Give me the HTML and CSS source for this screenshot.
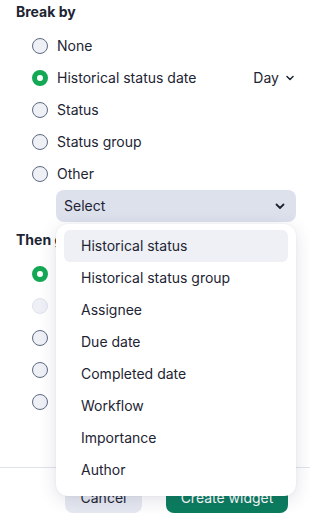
FILE: index.html
```html
<!DOCTYPE html>
<html lang="en">
	<head>
		<meta charset="UTF-8" />
		<meta name="viewport" content="width=device-width, initial-scale=1.0" />
		<title>Break by</title>
		<link rel="stylesheet" href="styles.css">
	</head>
	<body>
		<div class="panel">
			<div class="section">
				<h2 class="heading">Break by</h2>
				<div class="options">
					<label class="option"><span class="radio"></span><span class="label">None</span></label>
					<label class="option"><span class="radio checked"></span><span class="label">Historical status date</span>
						<span class="unit">Day
							<svg width="8" height="6" viewBox="0 0 8 6"><path d="M1 1.5l3 3 3-3" fill="none" stroke="#1d2433" stroke-width="1.5" stroke-linecap="round" stroke-linejoin="round"/></svg>
						</span>
					</label>
					<label class="option"><span class="radio"></span><span class="label">Status</span></label>
					<label class="option"><span class="radio"></span><span class="label">Status group</span></label>
					<label class="option"><span class="radio"></span><span class="label">Other</span></label>
					<div class="select-wrap">
						<div class="select">
							<span>Select</span>
							<svg width="10" height="7" viewBox="0 0 10 7"><path d="M1.5 1.5l3.5 3.5 3.5-3.5" fill="none" stroke="#1d2433" stroke-width="1.8" stroke-linecap="round" stroke-linejoin="round"/></svg>
						</div>
						<ul class="menu">
							<li class="item active">Historical status</li>
							<li class="item">Historical status group</li>
							<li class="item">Assignee</li>
							<li class="item">Due date</li>
							<li class="item">Completed date</li>
							<li class="item">Workflow</li>
							<li class="item">Importance</li>
							<li class="item">Author</li>
						</ul>
					</div>
				</div>
			</div>
			<div class="section">
				<h2 class="heading">Then group by</h2>
				<div class="options">
					<label class="option"><span class="radio checked"></span><span class="label">None</span></label>
					<label class="option"><span class="radio disabled"></span><span class="label">Historical status</span></label>
					<label class="option"><span class="radio"></span><span class="label">Status</span></label>
					<label class="option"><span class="radio"></span><span class="label">Status group</span></label>
					<label class="option"><span class="radio"></span><span class="label">Other</span></label>
				</div>
			</div>
		</div>
		<div class="footer">
			<button class="btn btn-cancel">Cancel</button>
			<button class="btn btn-primary">Create widget</button>
		</div>
	</body>
</html>
```

FILE: styles.css
```css
body {
	margin: 0;
	background-color: #ffffff;
	font-family: Inter, "Noto Sans", sans-serif;
	font-size: 14px;
	line-height: 20px;
	color: #1d2433;
}
.panel {
	padding: 2px 14px 0 16px;
}
.heading {
	margin: 0;
	font-size: 14px;
	line-height: 20px;
	font-weight: 700;
}
.options {
	display: flex;
	flex-direction: column;
	padding: 8px 0 0 16px;
}
.section + .section {
	margin-top: 8px;
}
.option {
	display: flex;
	align-items: center;
	gap: 9px;
	height: 32px;
}
.radio {
	box-sizing: border-box;
	width: 16px;
	height: 16px;
	border-radius: 50%;
	border: 1.5px solid #5d6882;
	background-color: #eef0f6;
	flex-shrink: 0;
}
.radio.checked {
	border: 5px solid #14a855;
	background-color: #ffffff;
}
.radio.disabled {
	border-color: #dfe3ec;
	background-color: #eef0f6;
}
.label {
	flex: 1;
}
.unit {
	display: flex;
	align-items: center;
	gap: 7px;
	margin-right: 2px;
}
.select-wrap {
	position: relative;
	margin-left: 24px;
}
.select {
	display: flex;
	align-items: center;
	justify-content: space-between;
	height: 32px;
	padding: 0 11px 0 8px;
	border-radius: 8px;
	background-color: #dce1ec;
}
.menu {
	position: absolute;
	top: 34px;
	left: 0;
	right: 0;
	z-index: 2;
	list-style: none;
	margin: 0;
	padding: 6px 8px 10px;
	background-color: #ffffff;
	border-radius: 12px;
	box-shadow: 0 4px 18px rgba(40, 52, 90, 0.14), 0 0 2px rgba(40, 52, 90, 0.08);
}
.item {
	height: 32px;
	line-height: 32px;
	padding-left: 17px;
	border-radius: 6px;
}
.item.active {
	background-color: #eef0f5;
}
.footer {
	display: flex;
	justify-content: flex-end;
	gap: 24px;
	margin-top: 49px;
	padding: 13px 22px 0 0;
	border-top: 1px solid #dfe3ec;
}
.btn {
	height: 32px;
	border: none;
	border-radius: 8px;
	font-family: Inter, "Noto Sans", sans-serif;
	font-size: 14px;
	padding: 0 12px;
}
.btn-cancel {
	width: 77px;
	background-color: #e6e9f1;
	color: #1d2433;
}
.btn-primary {
	width: 122px;
	background-color: #0b7d5e;
	color: #ffffff;
}
```
